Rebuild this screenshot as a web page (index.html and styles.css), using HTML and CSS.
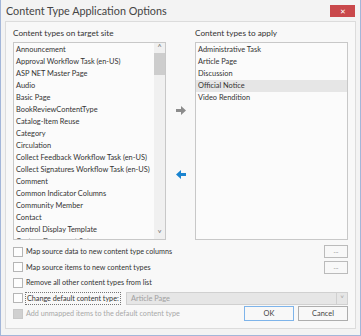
FILE: index.html
```html
<!DOCTYPE html>
<html lang="en">
<head>
    <meta charset="UTF-8">
    <title>Content Type Application Options</title>
    <link rel="stylesheet" href="styles.css">
</head>
<body>
    <div class="window">
        <div class="titlebar">
            <span class="title">Content Type Application Options</span>
            <span class="close-btn">&#x2715;</span>
        </div>

        <div class="panel">
            <div class="columns">
                <div class="col">
                    <div class="label">Content types on target site</div>
                    <div class="listbox">
                        <div class="items">
                            <div class="item">Announcement</div>
                            <div class="item">Approval Workflow Task (en-US)</div>
                            <div class="item">ASP NET Master Page</div>
                            <div class="item">Audio</div>
                            <div class="item">Basic Page</div>
                            <div class="item">BookReviewContentType</div>
                            <div class="item">Catalog-Item Reuse</div>
                            <div class="item">Category</div>
                            <div class="item">Circulation</div>
                            <div class="item">Collect Feedback Workflow Task (en-US)</div>
                            <div class="item">Collect Signatures Workflow Task (en-US)</div>
                            <div class="item">Comment</div>
                            <div class="item">Common Indicator Columns</div>
                            <div class="item">Community Member</div>
                            <div class="item">Contact</div>
                            <div class="item">Control Display Template</div>
                            <div class="item">Custom Document Set</div>
                        </div>
                        <div class="scrollbar">
                            <span class="sb-arrow">&#x2C4;</span>
                            <div class="sb-thumb"></div>
                            <span class="sb-arrow sb-down">&#x2C5;</span>
                        </div>
                    </div>
                </div>

                <div class="arrows">
                    <svg class="arrow" width="10" height="9" viewBox="0 0 10 9">
                        <path d="M0 3h5V0l5 4.5L5 9V6H0z" fill="#8c8c8c"/>
                    </svg>
                    <svg class="arrow" width="10" height="9" viewBox="0 0 10 9">
                        <path d="M10 3H5V0L0 4.5 5 9V6h5z" fill="#1a84d0"/>
                    </svg>
                </div>

                <div class="col">
                    <div class="label">Content types to apply</div>
                    <div class="listbox">
                        <div class="items">
                            <div class="item">Administrative Task</div>
                            <div class="item">Article Page</div>
                            <div class="item">Discussion</div>
                            <div class="item selected">Official Notice</div>
                            <div class="item">Video Rendition</div>
                        </div>
                    </div>
                </div>
            </div>

            <div class="options">
                <div class="option">
                    <span class="check"></span>
                    <span class="opt-text">Map source data to new content type columns</span>
                    <span class="dots-btn">...</span>
                </div>
                <div class="option">
                    <span class="check"></span>
                    <span class="opt-text">Map source items to new content types</span>
                    <span class="dots-btn">...</span>
                </div>
                <div class="option">
                    <span class="check"></span>
                    <span class="opt-text">Remove all other content types from list</span>
                </div>
                <div class="option">
                    <span class="check"></span>
                    <span class="opt-text focused">Change default content type:</span>
                    <div class="dropdown">
                        <span>Article Page</span>
                        <span class="dd-arrow">&#x2C5;</span>
                    </div>
                </div>
                <div class="option last">
                    <span class="check disabled"></span>
                    <span class="opt-text muted">Add unmapped items to the default content type</span>
                    <div class="buttons">
                        <button type="button" class="btn default">OK</button>
                        <button type="button" class="btn">Cancel</button>
                    </div>
                </div>
            </div>
            <span class="grip"></span>
        </div>
    </div>
</body>
</html>
```

FILE: styles.css
```css
body {
    margin: 0;
    padding: 0;
    font-family: Lato, "Noto Sans", sans-serif;
    background: #ffffff;
}

.window {
    width: 361px;
    height: 336px;
    box-sizing: border-box;
    border: 1px solid #a3b6d9;
    border-top: none;
    background: #f3f3f3;
    display: flex;
    flex-direction: column;
    color: #333;
}

.titlebar {
    height: 21px;
    display: flex;
    align-items: center;
    justify-content: space-between;
    padding: 0 5px 0 5px;
}

.title {
    font-size: 10.8px;
    color: #444;
}

.close-btn {
    width: 25px;
    height: 12px;
    background: #c9484b;
    color: #fff;
    font-size: 7px;
    line-height: 12px;
    text-align: center;
}

.panel {
    flex: 1;
    margin: 0 4px 6px 4px;
    border: 1px solid #dcdcdc;
    background: #f8f8f8;
    padding: 5px 7px 0 7px;
    display: flex;
    flex-direction: column;
    position: relative;
}

.columns {
    display: flex;
}

.col {
    width: 153px;
    display: flex;
    flex-direction: column;
}

.label {
    font-size: 8.2px;
    height: 15px;
    line-height: 13px;
}

.listbox {
    height: 196px;
    border: 1px solid #c8c8c8;
    background: #fbfbfb;
    display: flex;
    overflow: hidden;
}

.items {
    flex: 1;
    padding-top: 1px;
    overflow: hidden;
}

.item {
    height: 12px;
    line-height: 12px;
    font-size: 7.4px;
    padding-left: 2px;
    white-space: nowrap;
}

.item.selected {
    background: #e6e6e6;
}

.scrollbar {
    width: 11px;
    background: #f0f0f0;
    display: flex;
    flex-direction: column;
    align-items: center;
}

.sb-arrow {
    font-size: 9px;
    line-height: 10px;
    color: #777;
}

.sb-down {
    margin-top: auto;
}

.sb-thumb {
    width: 11px;
    height: 22px;
    background: #cdcdcd;
}

.arrows {
    width: 29px;
    display: flex;
    flex-direction: column;
    align-items: center;
    padding-top: 79px;
    gap: 55px;
}

.options {
    display: flex;
    flex-direction: column;
    margin-top: 4px;
}

.option {
    height: 15.5px;
    display: flex;
    align-items: center;
    font-size: 7.2px;
    white-space: nowrap;
}

.check {
    width: 8px;
    height: 8px;
    border: 1px solid #b5b5b5;
    background: #fdfdfd;
    margin-right: 3px;
    flex-shrink: 0;
}

.check.disabled {
    background: #d0d0d0;
    border-color: #c8c8c8;
}

.opt-text.focused {
    outline: 1px dotted #777;
    padding: 1px 1px;
}

.opt-text.muted {
    color: #a8a8a8;
}

.dots-btn {
    margin-left: auto;
    width: 22px;
    height: 11px;
    border: 1px solid #bbb;
    background: #f8f8f8;
    font-size: 7px;
    line-height: 8px;
    text-align: center;
    color: #999;
}

.dropdown {
    margin-left: auto;
    width: 216px;
    height: 11px;
    border: 1px solid #d0d0d0;
    background: #e6e6e6;
    color: #a0a0a0;
    display: flex;
    align-items: center;
    justify-content: space-between;
    padding-left: 4px;
    font-size: 7.4px;
}

.dd-arrow {
    width: 10px;
    height: 11px;
    border-left: 1px solid #d0d0d0;
    text-align: center;
    line-height: 11px;
    font-size: 8px;
}

.buttons {
    margin-left: auto;
    display: flex;
    gap: 4px;
}

.btn {
    width: 50px;
    height: 15px;
    padding: 0;
    border: 1px solid #adadad;
    background: #f8f8f8;
    font-family: Lato, "Noto Sans", sans-serif;
    font-size: 7.4px;
    color: #444;
}

.btn.default {
    border-color: #7eb4ea;
}

.grip {
    position: absolute;
    right: -3px;
    bottom: -5px;
    width: 5px;
    height: 5px;
    background-image: radial-gradient(#aaa 0.6px, transparent 0.7px);
    background-size: 2px 2px;
}
```
